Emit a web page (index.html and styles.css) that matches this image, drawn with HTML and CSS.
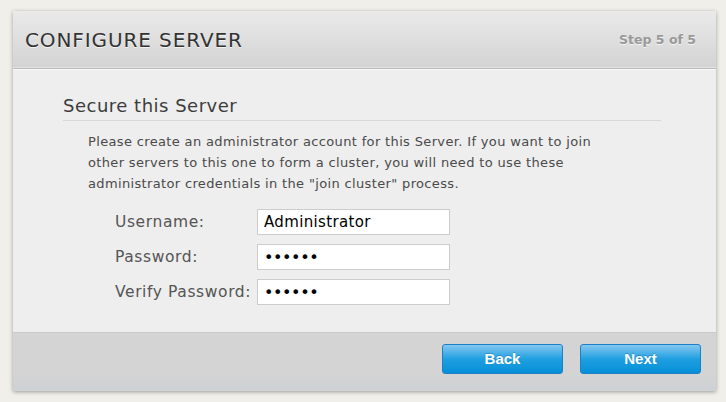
FILE: index.html
```html
<!DOCTYPE html>
<html>

<head>
    <title>
        Configure Server
    </title>
    <link rel="stylesheet" href="styles.css">
</head>

<body>
    <div class="wizard">
        <div class="wizard-header">
            <h1>CONFIGURE SERVER</h1>
            <span class="step">Step 5 of 5</span>
        </div>
        <div class="wizard-body">
            <h2>Secure this Server</h2>
            <p class="intro">Please create an administrator account for this Server. If you want to join
                other servers to this one to form a cluster, you will need to use these
                administrator credentials in the "join cluster" process.</p>
            <form class="credentials" autocomplete="off" onsubmit="event.preventDefault();">
                <div class="field">
                    <label for="username">Username:</label>
                    <input type="text" id="username" value="Administrator">
                </div>
                <div class="field">
                    <label for="password">Password:</label>
                    <input type="password" id="password" value="secret">
                </div>
                <div class="field">
                    <label for="verify">Verify Password:</label>
                    <input type="password" id="verify" value="secret">
                </div>
            </form>
        </div>
        <div class="wizard-footer">
            <button type="button" class="btn">Back</button>
            <button type="button" class="btn">Next</button>
        </div>
    </div>
</body>

</html>
```

FILE: styles.css
```css
body {
    margin: 0;
    padding: 11px 10px 11px 13px;
    background-color: #f1efe9;
    font-family: "DejaVu Sans", Verdana, sans-serif;
}

.wizard {
    width: 703px;
    height: 380px;
    display: flex;
    flex-direction: column;
    background-color: #eeeeee;
    box-shadow: 0 1px 4px rgba(0, 0, 0, 0.35);
}

.wizard-header {
    height: 57px;
    display: flex;
    align-items: center;
    justify-content: space-between;
    padding: 0 20px 0 12px;
    background: linear-gradient(#eaeaea, #d3d3d3);
    border-bottom: 1px solid #b6babd;
    box-shadow: inset 0 -1px 0 #e4e4e4;
}

.wizard-header h1 {
    margin: 0;
    font-size: 20px;
    font-weight: normal;
    letter-spacing: 0.9px;
    color: #333333;
    text-shadow: 0 1px 0 #f4f4f4;
}

.step {
    font-size: 12.5px;
    font-weight: bold;
    color: #999999;
    text-shadow: 0 1px 0 #f4f4f4;
}

.wizard-body {
    flex: 1;
    padding: 25px 55px 0 50px;
    border-top: 1px solid #f8f8f8;
}

.wizard-body h2 {
    margin: 0;
    padding-bottom: 4px;
    font-size: 18px;
    font-weight: normal;
    letter-spacing: 0.5px;
    color: #3c3c3c;
    border-bottom: 1px solid #d6d9db;
}

.intro {
    width: 525px;
    margin: 10px 0 0 25px;
    font-size: 13px;
    line-height: 21px;
    letter-spacing: 0.35px;
    color: #4a4a4a;
}

.credentials {
    margin: 15px 0 0 52px;
    display: flex;
    flex-direction: column;
    gap: 9px;
}

.field {
    display: flex;
    align-items: center;
}

.field label {
    width: 142px;
    font-size: 15.5px;
    letter-spacing: 0.6px;
    color: #555555;
}

.field input {
    width: 193px;
    height: 26px;
    margin: 0;
    padding: 0 6px;
    box-sizing: border-box;
    border: 1px solid #cccccc;
    background-color: #ffffff;
    font-family: "DejaVu Sans", Verdana, sans-serif;
    font-size: 15px;
    letter-spacing: 0.35px;
    color: #000000;
}

.field input[type=password] {
    font-size: 16px;
    letter-spacing: -0.4px;
}

.wizard-footer {
    height: 59px;
    display: flex;
    align-items: center;
    justify-content: flex-end;
    gap: 17px;
    padding: 0 15px 7px 0;
    box-sizing: border-box;
    background: linear-gradient(#d4d4d4 70%, #cdd1d5);
    border-top: 1px solid #c9c9c9;
}

.btn {
    width: 121px;
    height: 30px;
    border: 1px solid #1d7fc6;
    border-radius: 3px;
    background: linear-gradient(#86c8f0, #1f9fe0 50%, #0590d8);
    color: #ffffff;
    font-family: "Liberation Sans", Arial, sans-serif;
    font-size: 15px;
    font-weight: bold;
    text-shadow: 0 -1px 0 rgba(0, 60, 120, 0.3);
    cursor: pointer;
}
```
